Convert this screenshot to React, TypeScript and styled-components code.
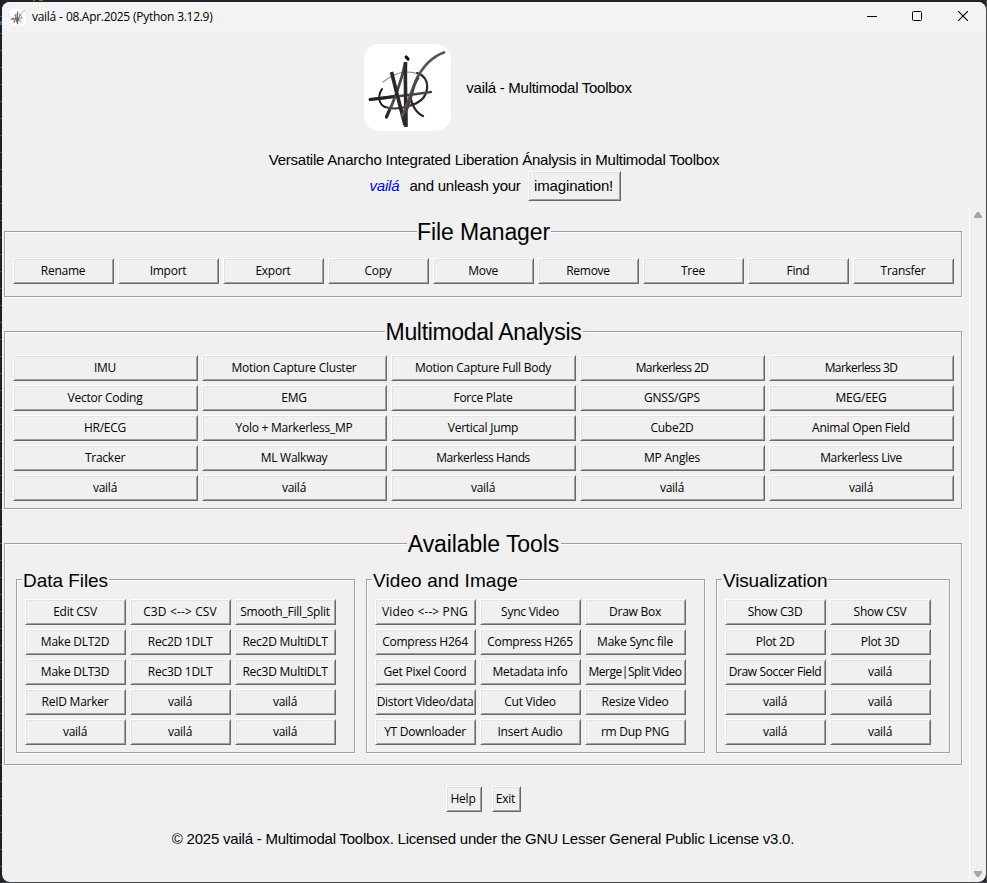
import React from "react";
import styled, { createGlobalStyle } from "styled-components";

const FACE = "#f0f0f0";

const GlobalStyle = createGlobalStyle`
  * { box-sizing: border-box; }
  html, body { margin: 0; padding: 0; }
  body { width: 987px; height: 883px; overflow: hidden; background: #1d2027; }
`;

const Desktop = styled.div`
  width: 987px;
  height: 883px;
  padding: 2px 1px 1px 2px;
  background:
    linear-gradient(90deg, transparent 33px, #8f7a1c 33px 35px, transparent 35px 39px, #8f7a1c 39px 43px, transparent 43px) 0 0 / 100% 1px no-repeat,
    linear-gradient(#2f6f96, #2f6f96) 0 21px / 2px 4px no-repeat,
    repeating-linear-gradient(#1b2029 0 16px, #4b5058 16px 17px) 0 0 / 2px 100% no-repeat,
    linear-gradient(#46474b, #46474b) 100% 0 / 1px 100% no-repeat,
    linear-gradient(#46474b, #46474b) 0 100% / 100% 1px no-repeat,
    #202329;
`;

const Window = styled.div`
  display: flex;
  flex-direction: column;
  height: 880px;
  border-radius: 8px;
  overflow: hidden;
  background: ${FACE};
  color: #000;
  font-family: "Liberation Sans", Arial, sans-serif;
`;

const TitleBar = styled.div`
  display: flex;
  align-items: center;
  height: 30px;
  flex: none;
  padding-left: 8px;
  background: #f3f3f3;
`;

const TitleIcon = styled.div`
  width: 16px;
  height: 16px;
  border-radius: 3px;
  background: #fff;
  svg { display: block; width: 16px; height: 16px; }
`;

const TitleText = styled.div`
  flex: 1;
  margin-left: 6px;
  font: 12px/16px "Open Sans", "Noto Sans", sans-serif;
  letter-spacing: -0.3px;
  word-spacing: 0.4px;
`;

const Caption = styled.div`
  width: 46px;
  height: 30px;
  display: flex;
  align-items: center;
  justify-content: center;
  padding-bottom: 2px;
  svg { display: block; }
`;

const Header = styled.div`
  height: 174px;
  flex: none;
  display: flex;
  flex-direction: column;
  align-items: center;
  padding-top: 12px;
`;

const Brand = styled.div`
  display: flex;
  align-items: center;
  gap: 15px;
  margin-left: 8px;
`;

const Logo = styled.div`
  width: 87px;
  height: 87px;
  border-radius: 15px;
  background: #fff;
  svg { display: block; }
`;

const Line = styled.div<{ $track?: number; $blue?: boolean }>`
  font-size: 15px;
  line-height: 18px;
  white-space: nowrap;
  letter-spacing: ${(p) => p.$track ?? 0}px;
  color: ${(p) => (p.$blue ? "#0000ff" : "#000")};
  font-style: ${(p) => (p.$blue ? "italic" : "normal")};
`;

const Tagline = styled.div`
  margin-top: 20px;
`;

const Invite = styled.div`
  display: flex;
  align-items: center;
  margin-top: 2px;
  margin-left: 2px;
  ${Line} + ${Line} { margin: 0 7px 0 10px; }
`;

const Button = styled.button<{ $w?: number; $h?: number; $large?: boolean; $track?: number }>`
  display: flex;
  align-items: center;
  justify-content: center;
  width: ${(p) => (p.$w ? p.$w + "px" : "auto")};
  min-width: 0;
  height: ${(p) => p.$h ?? 26}px;
  padding: 0 1px 1px 0;
  border: 1px solid;
  border-color: #fff #696969 #696969 #fff;
  box-shadow: inset 1px 1px #e3e3e3, inset -1px -1px #a0a0a0;
  background: ${FACE};
  color: #000;
  overflow: hidden;
  white-space: nowrap;
  font: ${(p) =>
    p.$large
      ? '15px/18px "Liberation Sans", Arial, sans-serif'
      : '12px/16px "Open Sans", "Noto Sans", sans-serif'};
  letter-spacing: ${(p) => p.$track ?? -0.25}px;
`;

const Content = styled.div`
  flex: 1;
  display: flex;
  min-height: 0;
`;

const Canvas = styled.div`
  flex: 1;
  display: flex;
  flex-direction: column;
  padding: 25px 7px 0 2px;
`;

const Frame = styled.div<{ $h: number; $gap?: number }>`
  width: 958px;
  height: ${(p) => p.$h}px;
  flex: none;
  margin-bottom: ${(p) => p.$gap ?? 0}px;
  padding: 0 7px 0 8px;
  border: 1px solid #a0a0a0;
  box-shadow: inset 1px 1px #fff, 1px 1px #fff;
  display: flex;
  flex-direction: column;
`;

const FrameTitle = styled.div<{ $w: number; $track: number }>`
  width: ${(p) => p.$w}px;
  height: 26px;
  margin: -14px auto 0;
  background: ${FACE};
  font-size: 23px;
  line-height: 29px;
  text-align: center;
  white-space: nowrap;
  letter-spacing: ${(p) => p.$track}px;
`;

const Grid = styled.div<{ $cols: number; $cell: number; $top: number }>`
  display: grid;
  grid-template-columns: repeat(${(p) => p.$cols}, ${(p) => p.$cell}px);
  gap: 4px;
  margin-top: ${(p) => p.$top}px;
`;

const Groups = styled.div`
  display: flex;
  gap: 11px;
  margin: 23px 0 0 3px;
`;

const Group = styled.div<{ $w: number }>`
  width: ${(p) => p.$w}px;
  height: 174px;
  padding: 0 0 0 8px;
  border: 1px solid #a0a0a0;
  box-shadow: inset 1px 1px #fff, 1px 1px #fff;
`;

const GroupTitle = styled.div<{ $w: number; $track: number }>`
  width: ${(p) => p.$w}px;
  height: 22px;
  margin: -11px 0 0 -3px;
  padding-left: 1px;
  background: ${FACE};
  font-size: 19px;
  line-height: 23px;
  white-space: nowrap;
  letter-spacing: ${(p) => p.$track}px;
`;

const Actions = styled.div`
  display: flex;
  justify-content: center;
  gap: 10px;
  margin-top: 21px;
`;

const License = styled.div`
  display: flex;
  justify-content: center;
  margin-top: 18px;
`;

const ScrollBar = styled.div`
  width: 17px;
  flex: none;
  display: flex;
  flex-direction: column;
  justify-content: space-between;
  align-items: center;
  padding: 6px 0 5px;
  border-left: 1px solid #fff;
  svg { display: block; }
`;

const Emblem = ({ size }: { size: number }) => (
  <svg width={size} height={size} viewBox="0 0 87 87" fill="none" strokeLinecap="round">
    <path d="M19 38C28 31 34 28 42 28C48 28 54 29 58 32" stroke="#8a8684" strokeWidth="1.2" />
    <path d="M53 29C60 31 64 37 63 45C62 53 56 59 45 62" stroke="#2b2a2b" strokeWidth="2.2" />
    <path d="M45 62C36 65 27 65 21 63" stroke="#3d3a3b" strokeWidth="1.9" />
    <path d="M21 63C15 60 13 53 18 45" stroke="#1d1c1e" strokeWidth="2" />
    <path d="M6 55.5C26 53 47 51 67 48" stroke="#4a4647" strokeWidth="2.4" />
    <path d="M6 55.5C16 54.5 24 53.5 33 52" stroke="#242225" strokeWidth="2.8" />
    <path d="M22.5 73C30 57 37 38 41 20" stroke="#4a4746" strokeWidth="2.8" />
    <path d="M22.5 73L25 67" stroke="#29282b" strokeWidth="3.2" />
    <path d="M27.5 28L33 50L41 81" stroke="#29282b" strokeWidth="3.6" strokeLinecap="butt" />
    <path d="M41.5 18C41 40 42 60 42 83" stroke="#29282b" strokeWidth="3.6" strokeLinecap="butt" />
    <path d="M46 51C47 60 52 69 59 72" stroke="#2b282b" strokeWidth="2.4" />
    <path d="M38 72C44 60 48 44 53 34C60 21 70 12 80 8.500" stroke="#5b5350" strokeWidth="2.7" />
    <path d="M42 67C48 55 48 42 54 34" stroke="#4a4442" strokeWidth="2.8" />
    <path d="M42.200 13L44 15" stroke="#111" strokeWidth="3.200" />
  </svg>
);

const fileButtons = ["Rename", "Import", "Export", "Copy", "Move", "Remove", "Tree", "Find", "Transfer"];

const analysisButtons = [
  "IMU", "Motion Capture Cluster", "Motion Capture Full Body", "Markerless 2D", "Markerless 3D",
  "Vector Coding", "EMG", "Force Plate", "GNSS/GPS", "MEG/EEG",
  "HR/ECG", "Yolo + Markerless_MP", "Vertical Jump", "Cube2D", "Animal Open Field",
  "Tracker", "ML Walkway", "Markerless Hands", "MP Angles", "Markerless Live",
  "vailá", "vailá", "vailá", "vailá", "vailá",
];

const groups = [
  {
    title: "Data Files", width: 339, titleWidth: 87, track: -0.05, cols: 3,
    items: [
      "Edit CSV", "C3D <--> CSV", "Smooth_Fill_Split",
      "Make DLT2D", "Rec2D 1DLT", "Rec2D MultiDLT",
      "Make DLT3D", "Rec3D 1DLT", "Rec3D MultiDLT",
      "ReID Marker", "vailá", "vailá",
      "vailá", "vailá", "vailá",
    ],
  },
  {
    title: "Video and Image", width: 339, titleWidth: 147, track: 0.1, cols: 3,
    items: [
      "Video <--> PNG", "Sync Video", "Draw Box",
      "Compress H264", "Compress H265", "Make Sync file",
      "Get Pixel Coord", "Metadata info", "Merge|Split Video",
      "Distort Video/data", "Cut Video", "Resize Video",
      "YT Downloader", "Insert Audio", "rm Dup PNG",
    ],
  },
  {
    title: "Visualization", width: 234, titleWidth: 106, track: -0.15, cols: 2,
    items: [
      "Show C3D", "Show CSV", "Plot 2D", "Plot 3D", "Draw Soccer Field", "vailá",
      "vailá", "vailá", "vailá", "vailá",
    ],
  },
];

/* Letter spacing of the captions that differ from the default. */
const tracking: Record<string, number> = {
  "Markerless 2D": -0.58,
  "Markerless 3D": -0.58,
  "Markerless Hands": -0.43,
  "Markerless Live": -0.33,
  "Draw Soccer Field": -0.38,
  "Merge|Split Video": -0.48,
  "Distort Video/data": -0.3,
  "C3D <--> CSV": 0.13,
  "Video <--> PNG": 0.13,
};

const ButtonGrid = ({ items, cols, cell, top }: { items: string[]; cols: number; cell: number; top: number }) => (
  <Grid $cols={cols} $cell={cell} $top={top}>
    {items.map((label, i) => (
      <Button key={i} $track={tracking[label]}>{label}</Button>
    ))}
  </Grid>
);

export default function App() {
  return (
    <>
      <GlobalStyle />
      <Desktop>
        <Window>
          <TitleBar>
            <TitleIcon><Emblem size={16} /></TitleIcon>
            <TitleText>vailá - 08.Apr.2025 (Python 3.12.9)</TitleText>
            <Caption>
              <svg width="12" height="10"><path d="M2 5.5H12" stroke="#000" /></svg>
            </Caption>
            <Caption>
              <svg width="10" height="10"><rect x=".5" y=".5" width="9" height="9" rx="1" fill="none" stroke="#000" /></svg>
            </Caption>
            <Caption>
              <svg width="10" height="10"><path d="M0 0L10 10M10 0L0 10" stroke="#000" strokeWidth="1.1" /></svg>
            </Caption>
          </TitleBar>
          <Header>
            <Brand>
              <Logo><Emblem size={87} /></Logo>
              <Line $track={-0.27}>vailá - Multimodal Toolbox</Line>
            </Brand>
            <Tagline>
              <Line $track={-0.23}>Versatile Anarcho Integrated Liberation Ánalysis in Multimodal Toolbox</Line>
            </Tagline>
            <Invite>
              <Line $blue $track={-0.15}>vailá</Line>
              <Line $track={-0.25}>and unleash your</Line>
              <Button $w={93} $h={30} $large $track={-0.15}>imagination!</Button>
            </Invite>
          </Header>
          <Content>
            <Canvas>
              <Frame $h={66} $gap={34}>
                <FrameTitle $w={134} $track={-0.1}>File Manager</FrameTitle>
                <ButtonGrid items={fileButtons} cols={9} cell={101} top={14} />
              </Frame>
              <Frame $h={178} $gap={34}>
                <FrameTitle $w={198} $track={-0.32}>Multimodal Analysis</FrameTitle>
                <ButtonGrid items={analysisButtons} cols={5} cell={185} top={11} />
              </Frame>
              <Frame $h={222}>
                <FrameTitle $w={154} $track={-0.08}>Available Tools</FrameTitle>
                <Groups>
                  {groups.map((g) => (
                    <Group key={g.title} $w={g.width}>
                      <GroupTitle $w={g.titleWidth} $track={g.track}>{g.title}</GroupTitle>
                      <ButtonGrid items={g.items} cols={g.cols} cell={101} top={8} />
                    </Group>
                  ))}
                </Groups>
              </Frame>
              <Actions>
                <Button $w={36}>Help</Button>
                <Button $w={29}>Exit</Button>
              </Actions>
              <License>
                <Line $track={-0.22}>© 2025 vailá - Multimodal Toolbox. Licensed under the GNU Lesser General Public License v3.0.</Line>
              </License>
            </Canvas>
            <ScrollBar>
              <svg width="8" height="6"><path d="M3 0h2l3 4.5V6H0V4.5z" fill="#a6a6a6" /></svg>
              <svg width="8" height="6"><path d="M3 6h2l3-4.5V0H0v1.5z" fill="#a6a6a6" /></svg>
            </ScrollBar>
          </Content>
        </Window>
      </Desktop>
    </>
  );
}
